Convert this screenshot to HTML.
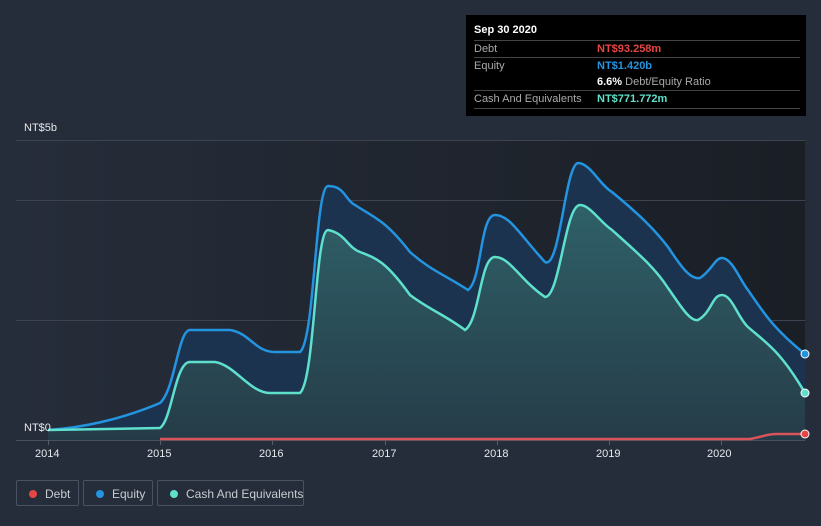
<!DOCTYPE html>
<html><head><meta charset="utf-8"><style>
body{margin:0;width:821px;height:526px;background:#262d3a;font-family:"Liberation Sans",sans-serif;overflow:hidden;position:relative}
.tt{position:absolute;left:466px;top:15px;width:340px;height:101px;background:#000;color:#fff;font-size:11px}
.tt .r{position:absolute;left:8px;right:6px;border-top:1px solid #444;height:17px;line-height:17px;color:#aaa}
.tt .v{position:absolute;left:123px;font-weight:bold}
.leg{position:absolute;top:480px;height:26px;border:1px solid #4a5160;border-radius:2px;color:#c8ccd2;font-size:12px;line-height:26px;box-sizing:border-box;white-space:nowrap}
.leg i{position:absolute;left:12px;top:9px;width:8px;height:8px;border-radius:50%}
.ax{position:absolute;color:#e6e8eb;font-size:11px}
</style></head><body>
<svg width="821" height="526" style="position:absolute;left:0;top:0">
<defs>
<linearGradient id="bg" x1="0" x2="1"><stop offset="0" stop-color="#262d3a"/><stop offset="1" stop-color="#1a1e25"/></linearGradient>
<linearGradient id="cf" x1="0" y1="0" x2="0" y2="1"><stop offset="0" stop-color="#2f6068"/><stop offset="1" stop-color="#253c48"/></linearGradient>
</defs>
<rect x="16" y="140" width="789" height="300" fill="url(#bg)"/>
<g stroke="#3d4350" stroke-width="1"><line x1="16" y1="140.5" x2="805" y2="140.5"/><line x1="16" y1="200.5" x2="805" y2="200.5"/><line x1="16" y1="320.5" x2="805" y2="320.5"/><line x1="16" y1="440.5" x2="805" y2="440.5" stroke="#4a505c"/></g>
<path d="M48 430 C80 428 120 420 160 403 C175 390 178 330 190 330 L230 330 C250 333 255 352 275 352 L300 352 C315 340 315 187 328 186 C345 186 345 200 355 205 C375 218 385 220 410 252 C430 270 445 275 468 290 C482 280 480 215 495 215 C510 215 520 235 545 262 C560 270 565 165 578 163 C590 163 600 185 612 192 C640 215 655 230 668 247 C680 265 690 280 700 278 C712 270 715 258 722 258 C732 258 740 280 748 290 C765 315 775 330 805 354 L805 440 L48 440Z" fill="#1c3350"/>
<path d="M48 430 L160 428 C172 420 175 362 190 362 L215 362 C235 365 250 393 270 393 L300 393 C315 380 315 230 328 230 C345 233 348 248 360 252 C375 258 385 260 410 295 C430 310 445 315 465 330 C480 320 480 257 495 257 C510 257 520 280 545 297 C560 297 565 205 580 205 C590 205 600 222 612 230 C640 255 655 268 668 288 C680 305 690 322 698 320 C712 312 712 295 722 295 C732 295 738 318 748 327 C765 342 780 350 805 393 L805 440 L48 440Z" fill="url(#cf)"/>
<path d="M48 430 C80 428 120 420 160 403 C175 390 178 330 190 330 L230 330 C250 333 255 352 275 352 L300 352 C315 340 315 187 328 186 C345 186 345 200 355 205 C375 218 385 220 410 252 C430 270 445 275 468 290 C482 280 480 215 495 215 C510 215 520 235 545 262 C560 270 565 165 578 163 C590 163 600 185 612 192 C640 215 655 230 668 247 C680 265 690 280 700 278 C712 270 715 258 722 258 C732 258 740 280 748 290 C765 315 775 330 805 354" fill="none" stroke="#2394df" stroke-width="2.5"/>
<path d="M48 430 L160 428 C172 420 175 362 190 362 L215 362 C235 365 250 393 270 393 L300 393 C315 380 315 230 328 230 C345 233 348 248 360 252 C375 258 385 260 410 295 C430 310 445 315 465 330 C480 320 480 257 495 257 C510 257 520 280 545 297 C560 297 565 205 580 205 C590 205 600 222 612 230 C640 255 655 268 668 288 C680 305 690 322 698 320 C712 312 712 295 722 295 C732 295 738 318 748 327 C765 342 780 350 805 393" fill="none" stroke="#5ee0cc" stroke-width="2.5"/>
<path d="M160 439 L750 439 C765 436 768 434 776 434 L805 434" fill="none" stroke="#d9535b" stroke-width="2.5"/>
<circle cx="805" cy="354" r="4" fill="#2394df" stroke="#fff"/>
<circle cx="805" cy="393" r="4" fill="#5ee0cc" stroke="#fff"/>
<circle cx="805" cy="434" r="4" fill="#e64545" stroke="#fff"/>
<g stroke="#555c68"><line x1="48.5" y1="440" x2="48.5" y2="445"/><line x1="160.5" y1="440" x2="160.5" y2="445"/><line x1="272.5" y1="440" x2="272.5" y2="445"/><line x1="385.5" y1="440" x2="385.5" y2="445"/><line x1="497.5" y1="440" x2="497.5" y2="445"/><line x1="609.5" y1="440" x2="609.5" y2="445"/><line x1="721.5" y1="440" x2="721.5" y2="445"/></g>
</svg>
<div class="ax" style="left:24px;top:122px">NT$5b</div>
<div class="ax" style="left:24px;top:422px">NT$0</div>
<div class="ax" style="left:35px;top:448px">2014</div>
<div class="ax" style="left:147px;top:448px">2015</div>
<div class="ax" style="left:259px;top:448px">2016</div>
<div class="ax" style="left:372px;top:448px">2017</div>
<div class="ax" style="left:484px;top:448px">2018</div>
<div class="ax" style="left:596px;top:448px">2019</div>
<div class="ax" style="left:707px;top:448px">2020</div>
<div class="tt">
<div style="position:absolute;left:8px;top:9px;font-weight:bold">Sep 30 2020</div>
<div class="r" style="top:25px">Debt<span class="v" style="color:#e64545">NT$93.258m</span></div>
<div class="r" style="top:42px">Equity<span class="v" style="color:#2394df">NT$1.420b</span></div>
<div class="r" style="top:59px;border-top:none"><span class="v" style="color:#fff">6.6% <span style="font-weight:normal;color:#aaa">Debt/Equity Ratio</span></span></div>
<div class="r" style="top:75px">Cash And Equivalents<span class="v" style="color:#5ee0cc">NT$771.772m</span></div>
<div class="r" style="top:93px;height:0"></div>
</div>
<div class="leg" style="left:16px;width:63px"><i style="background:#e64545"></i><span style="position:absolute;left:28px">Debt</span></div>
<div class="leg" style="left:83px;width:70px"><i style="background:#2394df"></i><span style="position:absolute;left:28px">Equity</span></div>
<div class="leg" style="left:157px;width:147px"><i style="background:#5ee0cc"></i><span style="position:absolute;left:28px">Cash And Equivalents</span></div>
</body></html>
